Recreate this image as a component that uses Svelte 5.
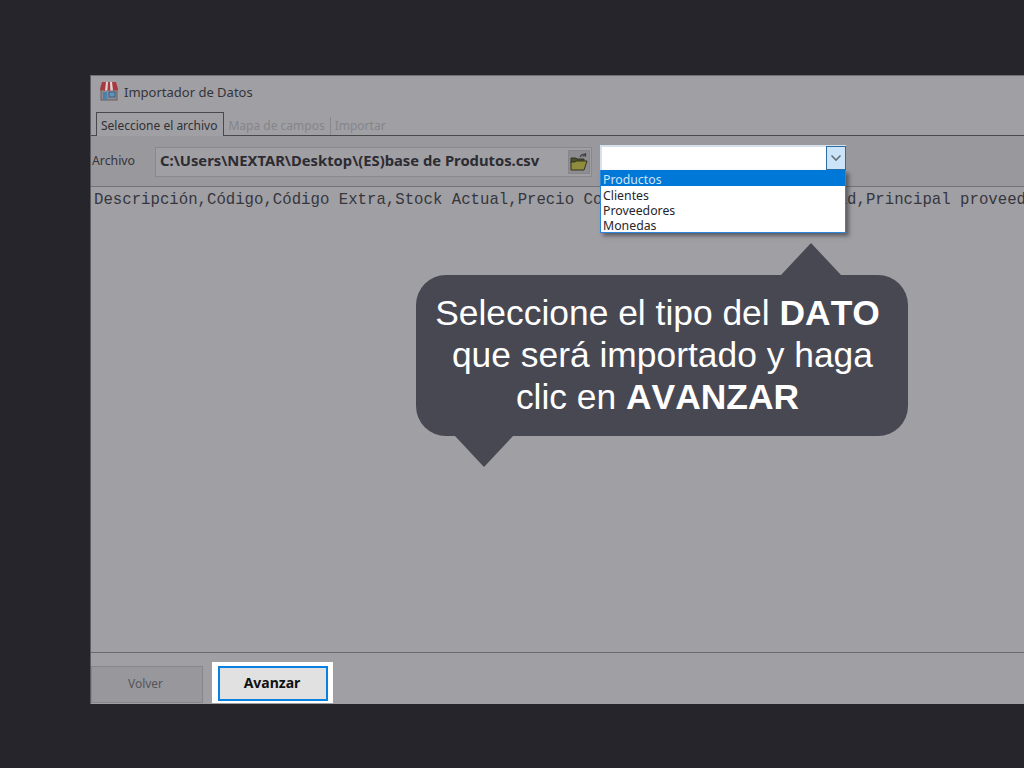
<script>
  const tabs = ['Mapa de campos', 'Importar'];
  const options = ['Productos', 'Clientes', 'Proveedores', 'Monedas'];
</script>

<div class="stage">
  <section class="window">
    <header class="title">
      <svg class="store" width="20" height="20" viewBox="0 0 20 20" aria-hidden="true">
        <rect x="2" y="8" width="16" height="11" fill="#8b8d96" stroke="#6e5a58" stroke-width="1"/>
        <rect x="4" y="11" width="4" height="8" fill="#4d7fa8"/>
        <rect x="10" y="11" width="6" height="5" fill="#5d93bd" stroke="#3f5f7c" stroke-width="1"/>
        <path d="M3 1h14l2 7a2 2 0 0 1-3 1 2 2 0 0 1-3 0 2 2 0 0 1-3 0 2 2 0 0 1-3 0 2 2 0 0 1-3 0 2 2 0 0 1-3-1z" fill="#a83a3f"/>
        <path d="M7 1h2l-.6 8.600H6zM11 1h2l1 8.600h-2.600z" fill="#d9d6d6"/>
      </svg>
      <span>Importador de Datos</span>
    </header>

    <nav class="tabs">
      <span class="tab active">Seleccione el archivo</span>
      {#each tabs as tab, i}
        <span class="tab" class:divided={i === 1}>{tab}</span>
      {/each}
    </nav>

    <div class="toolbar">
      <span class="label">Archivo</span>
      <div class="path">
        <strong>C:\Users\NEXTAR\Desktop\(ES)base de Produtos.csv</strong>
        <button class="folder" aria-label="Abrir">
          <svg width="20" height="20" viewBox="0 0 20 20" aria-hidden="true">
            <path d="M2 6h5l1 1h7v4H2z" fill="#4f4e2a" stroke="#33322a" stroke-width="1"/>
            <path d="M2 18V10h4l1-1h11l-3 9z" fill="#8f8d3d" stroke="#35341f" stroke-width="1"/>
            <path d="M11 5c1-2 3-3 5-2.500M16.500 1v3h-3" fill="none" stroke="#3a3a42" stroke-width="1.200"/>
          </svg>
        </button>
      </div>
      <div class="combo">
        <div class="input">
          <span class="arrow">
            <svg width="12" height="8" viewBox="0 0 12 8" aria-hidden="true"><path d="M1.500 1.500 6 6l4.500-4.500" fill="none" stroke="#66707c" stroke-width="1.600"/></svg>
          </span>
        </div>
        <ul class="list">
          {#each options as option, i}
            <li class:selected={i === 0}>{option}</li>
          {/each}
        </ul>
      </div>
    </div>

    <div class="content">Descripción,Código,Código Extra,Stock Actual,Precio Costo,Precio Venta,Por Unidad,Principal proveedor</div>

    <footer class="actions">
      <button class="volver">Volver</button>
      <div class="halo"><button class="avanzar">Avanzar</button></div>
    </footer>
  </section>

  <aside class="callout">
    <span class="tip up"></span>
    <p>Seleccione el tipo del <b>DATO</b><br/> que será importado y haga<br/>clic en <b>AVANZAR</b></p>
    <span class="tip down"></span>
  </aside>
</div>

<style>
  :global(body) { margin: 0; background: #25252b; overflow: hidden; }
  .stage {
    position: relative;
    width: 1024px;
    height: 768px;
    padding: 75px 0 64px 90px;
    box-sizing: border-box;
    overflow: hidden;
    font-family: "Noto Sans", "Open Sans", sans-serif;
  }
  .window {
    width: 934px;
    height: 629px;
    box-sizing: border-box;
    background: #a09fa4;
    border-top: 1px solid #6f6f74;
    border-left: 1px solid #5d5d62;
    display: flex;
    flex-direction: column;
    color: #34343a;
  }
  .title {
    height: 31px;
    display: flex;
    align-items: center;
    gap: 5px;
    padding-left: 8px;
    font-size: 13px;
  }
  .store { flex: none; margin-top: -2px; }
  .tabs {
    height: 29px;
    box-sizing: border-box;
    display: flex;
    align-items: flex-end;
    padding-left: 5px;
    border-bottom: 1px solid #48484d;
    font-size: 12px;
  }
  .tab { height: 18px; padding: 0 5px 0 4px; color: #85858a; line-height: 18px; }
  .tab.divided { border-left: 1px solid #87878c; }
  .tab.active {
    height: 24px;
    line-height: 25px;
    box-sizing: border-box;
    margin-bottom: -1px;
    color: #303036;
    background: #a09fa4;
    border: 1px solid #48484d;
    border-bottom: 0;
    padding: 0 6px 0 4px;
  }
  .toolbar {
    height: 51px;
    box-sizing: border-box;
    background: #99989d;
    display: flex;
    align-items: center;
    padding: 0 0 0 1px;
    border-bottom: 1px solid #737378;
    position: relative;
  }
  .label { width: 63px; font-size: 12.3px; margin-top: -2px; }
  .path {
    width: 437px;
    height: 30px;
    box-sizing: border-box;
    border: 1px solid #88888d;
    background: #a09fa4;
    display: flex;
    align-items: center;
    justify-content: space-between;
    padding: 0 0 0 4px;
    margin-top: 1px;
  }
  .path strong {
    font-family: "Noto Sans", "DejaVu Sans", sans-serif;
    font-size: 14.78px;
    font-weight: 700;
    color: #2c2c32;
    white-space: nowrap;
    padding-bottom: 3px;
  }
  .folder {
    width: 22px;
    height: 24px;
    padding: 0;
    margin-right: 1px;
    background: #8d8c90;
    border: 1px solid #86868a;
    display: flex;
    align-items: center;
    justify-content: center;
  }
  .combo { position: absolute; left: 509px; top: 9px; width: 246px; z-index: 2; }
  .input {
    height: 25px;
    box-sizing: border-box;
    background: #fff;
    border: 2px solid #d5e2ee;
    border-bottom: 0;
    display: flex;
    justify-content: flex-end;
  }
  .arrow {
    width: 20px;
    box-sizing: border-box;
    background: #cce4f7;
    border: 1px solid #2b6ea6;
    margin: -1px -2px 0 0;
    display: flex;
    align-items: center;
    justify-content: center;
  }
  .list {
    list-style: none;
    margin: 0;
    padding: 0 0 1px;
    background: #fff;
    border: 1px solid #2a86dc;
    border-top: 0;
    box-shadow: 3px 3px 4px rgba(40, 40, 46, 0.55);
    font-size: 12.3px;
    line-height: 19px;
    color: #26262c;
  }
  .list li { padding-left: 2px; height: 15px; }
  .list li.selected { background: #0078d7; color: #cfe3f5; height: 16px; line-height: 20px; }
  .content {
    flex: 1;
    min-height: 0;
    box-sizing: border-box;
    padding: 4px 0 0 3px;
    border-bottom: 1px solid #6a6a6f;
    font-family: "Liberation Mono", "DejaVu Sans Mono", monospace;
    font-size: 15.69px;
    line-height: 18px;
    color: #36363c;
    white-space: nowrap;
    overflow: hidden;
  }
  .actions {
    height: 51px;
    box-sizing: border-box;
    display: flex;
    align-items: flex-end;
    gap: 8px;
    padding: 0 0 1px 0;
  }
  .actions button { font-family: inherit; }
  .volver {
    width: 112px;
    height: 37px;
    box-sizing: border-box;
    background: #98979b;
    border: 1px solid #87878b;
    padding: 0 3px 2px 0;
    font-size: 12px;
    color: #55555b;
  }
  .halo { background: #fff; padding: 4px 5px 0 6px; height: 41px; box-sizing: border-box; margin-left: 1px; }
  .avanzar {
    display: block;
    width: 110px;
    height: 35px;
    box-sizing: border-box;
    background: #e1e1e1;
    border: 2px solid #0a80e0;
    font-size: 14px;
    font-weight: 700;
    color: #111;
    padding: 0 2px 2px 0;
  }
  .callout {
    position: absolute;
    left: 416px;
    top: 275px;
    width: 492px;
    height: 161px;
    background: #484853;
    border-radius: 30px;
    z-index: 3;
  }
  .callout p {
    margin: 0;
    padding: 17px 9px 0 0;
    text-align: center;
    font-family: "Liberation Sans", Arial, sans-serif;
    font-size: 35.4px;
    line-height: 42px;
    color: #fff;
    white-space: pre-wrap;
  }
  .callout b { font-kerning: none; }
  .tip { position: absolute; width: 0; height: 0; border-style: solid; }
  .tip.up {
    left: 365px;
    top: -32px;
    border-width: 0 30px 32px 30px;
    border-color: transparent transparent #484853 transparent;
  }
  .tip.down {
    left: 39px;
    bottom: -31px;
    border-width: 31px 29px 0 29px;
    border-color: #484853 transparent transparent transparent;
  }
</style>
